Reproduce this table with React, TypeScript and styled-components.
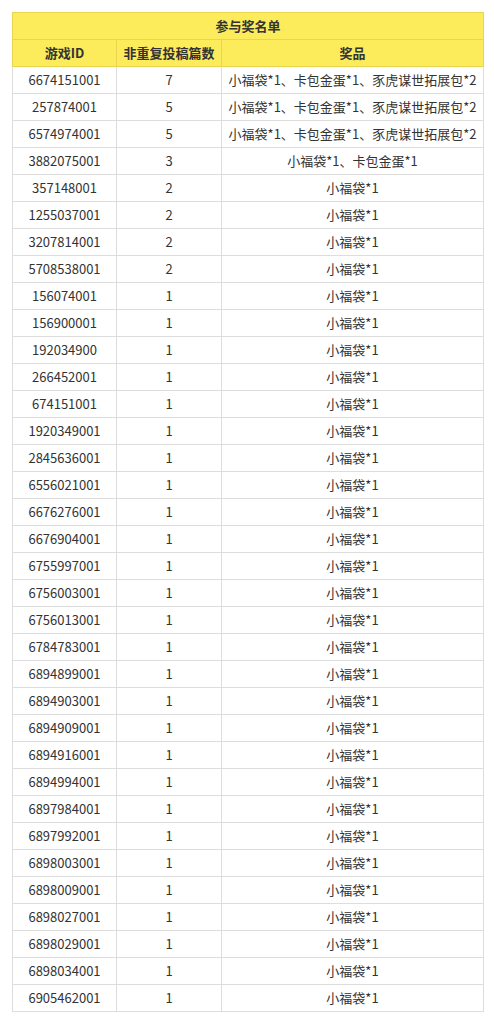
import React from "react";
import styled, { createGlobalStyle } from "styled-components";

const Global = createGlobalStyle`
  html, body { margin: 0; padding: 0; background: #ffffff; }
  body { padding: 12px 0 0 12px; font-family: "Noto Sans CJK SC", "Noto Sans", sans-serif; }
`;

const Table = styled.table`
  border-collapse: collapse;
  table-layout: fixed;
  width: 471px;
  font-size: 13px;
  color: #333333;
`;

const Cell = styled.td<{ $head?: boolean }>`
  height: 26px;
  padding: 0 2px;
  text-align: center;
  vertical-align: middle;
  white-space: nowrap;
  line-height: 26px;
  border: 1px solid ${(p) => (p.$head ? "#e9d64e" : "#dddddd")};
  background: ${(p) => (p.$head ? "#fcec5c" : "#ffffff")};
  font-weight: ${(p) => (p.$head ? 700 : 400)};
  overflow: hidden;
`;

const full = "小福袋*1、卡包金蛋*1、豕虎谋世拓展包*2";
const rows: [string, number, string][] = [
  ["6674151001", 7, full],
  ["257874001", 5, full],
  ["6574974001", 5, full],
  ["3882075001", 3, "小福袋*1、卡包金蛋*1"],
  ["357148001", 2, "小福袋*1"],
  ["1255037001", 2, "小福袋*1"],
  ["3207814001", 2, "小福袋*1"],
  ["5708538001", 2, "小福袋*1"],
  ["156074001", 1, "小福袋*1"],
  ["156900001", 1, "小福袋*1"],
  ["192034900", 1, "小福袋*1"],
  ["266452001", 1, "小福袋*1"],
  ["674151001", 1, "小福袋*1"],
  ["1920349001", 1, "小福袋*1"],
  ["2845636001", 1, "小福袋*1"],
  ["6556021001", 1, "小福袋*1"],
  ["6676276001", 1, "小福袋*1"],
  ["6676904001", 1, "小福袋*1"],
  ["6755997001", 1, "小福袋*1"],
  ["6756003001", 1, "小福袋*1"],
  ["6756013001", 1, "小福袋*1"],
  ["6784783001", 1, "小福袋*1"],
  ["6894899001", 1, "小福袋*1"],
  ["6894903001", 1, "小福袋*1"],
  ["6894909001", 1, "小福袋*1"],
  ["6894916001", 1, "小福袋*1"],
  ["6894994001", 1, "小福袋*1"],
  ["6897984001", 1, "小福袋*1"],
  ["6897992001", 1, "小福袋*1"],
  ["6898003001", 1, "小福袋*1"],
  ["6898009001", 1, "小福袋*1"],
  ["6898027001", 1, "小福袋*1"],
  ["6898029001", 1, "小福袋*1"],
  ["6898034001", 1, "小福袋*1"],
  ["6905462001", 1, "小福袋*1"],
];

export default function App() {
  return (
    <>
      <Global />
      <Table>
        <colgroup>
          <col style={{ width: 104 }} />
          <col style={{ width: 105 }} />
          <col style={{ width: 262 }} />
        </colgroup>
        <thead>
          <tr>
            <Cell as="th" $head colSpan={3}>参与奖名单</Cell>
          </tr>
          <tr>
            <Cell as="th" $head>游戏ID</Cell>
            <Cell as="th" $head>非重复投稿篇数</Cell>
            <Cell as="th" $head>奖品</Cell>
          </tr>
        </thead>
        <tbody>
          {rows.map(([id, n, prize]) => (
            <tr key={id}>
              <Cell>{id}</Cell>
              <Cell>{n}</Cell>
              <Cell>{prize}</Cell>
            </tr>
          ))}
        </tbody>
      </Table>
    </>
  );
}
